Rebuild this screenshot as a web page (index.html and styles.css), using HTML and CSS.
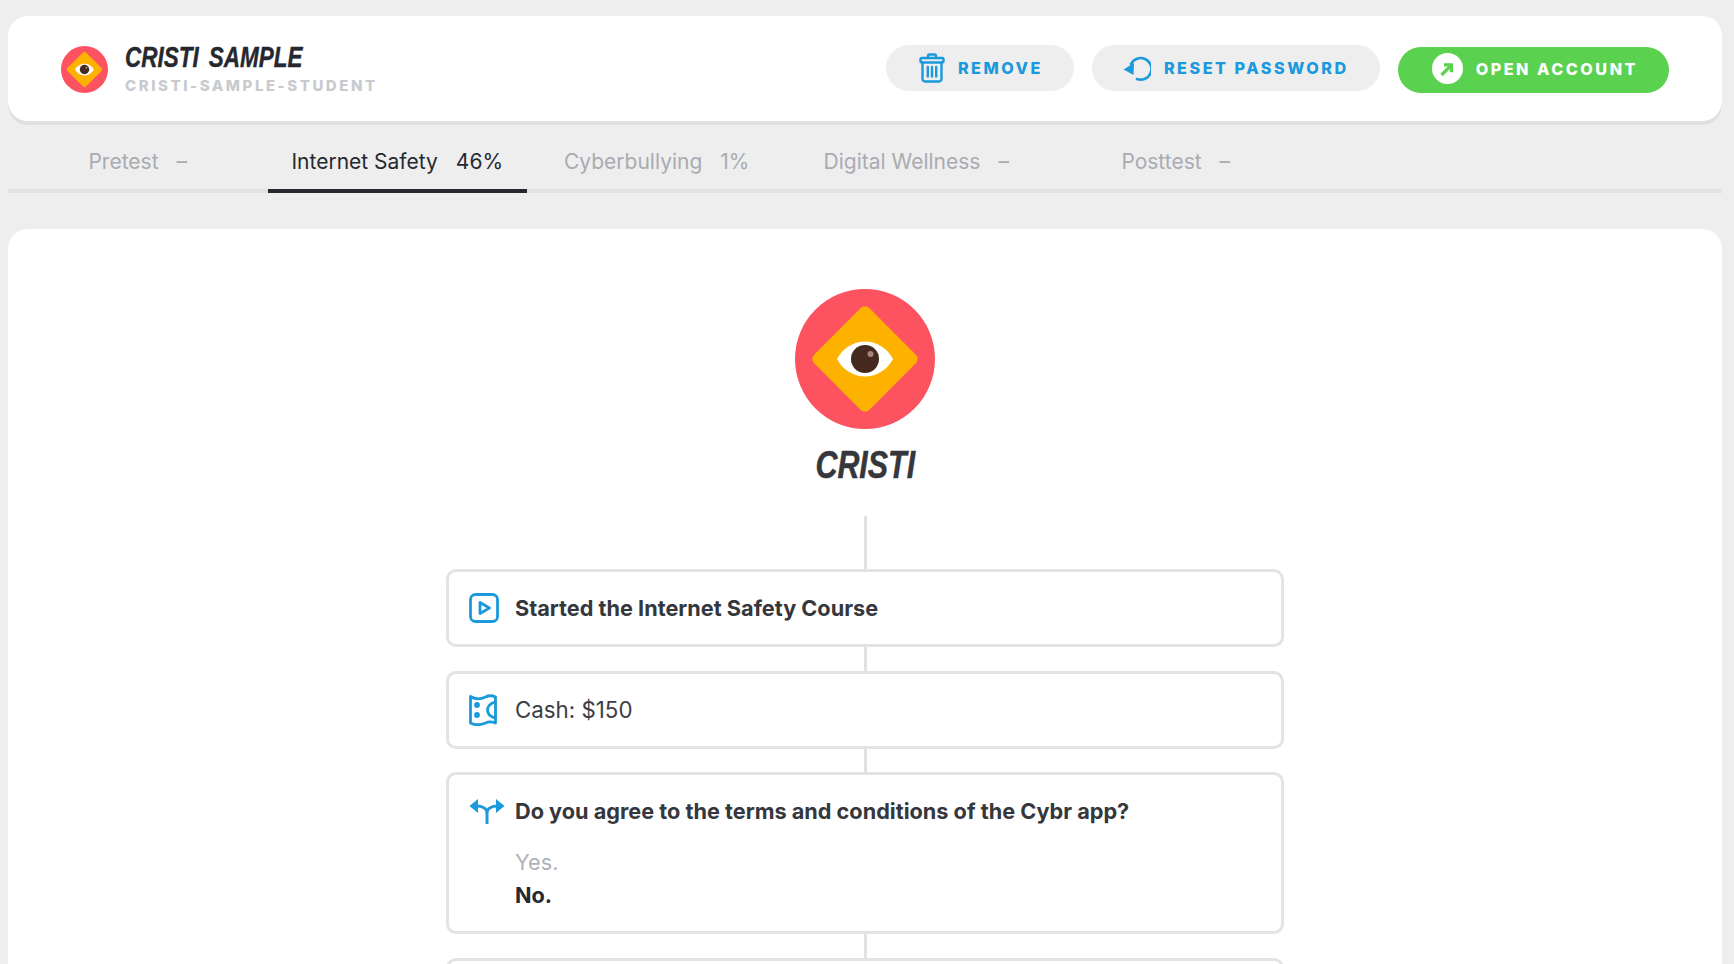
FILE: index.html
```html
<!DOCTYPE html>
<html lang="en">
<head>
<meta charset="utf-8">
<title>Cristi Sample</title>
<link rel="stylesheet" href="styles.css">
</head>
<body>
<svg class="defs" width="0" height="0" aria-hidden="true">
  <symbol id="eye" viewBox="0 0 140 140">
    <circle cx="70" cy="70" r="70" fill="#fd5260"/>
    <rect x="31" y="31" width="78" height="78" rx="6" fill="#feb200" transform="rotate(45 70 70)"/>
    <path d="M42 70C47 60 58 52.500 70 52.500s23 7.500 28 17.500c-5 10-16 17.500-28 17.500s-23-7.500-28-17.500z" fill="#fff"/>
    <circle cx="70" cy="70" r="14" fill="#46291f"/>
    <circle cx="75.500" cy="65" r="3" fill="#a5877c"/>
  </symbol>
</svg>
<header class="topbar">
  <div class="identity">
    <svg class="avatar"><use href="#eye"/></svg>
    <div class="names">
      <div class="name">CRISTI SAMPLE</div>
      <div class="handle">CRISTI-SAMPLE-STUDENT</div>
    </div>
  </div>
  <div class="actions">
    <button class="btn">
      <svg class="btn-icon" viewBox="0 0 26 30" fill="none" stroke="currentColor" stroke-width="2.400" stroke-linecap="round" stroke-linejoin="round"><path d="M9 5V3a1.500 1.500 0 0 1 1.500-1.500h5A1.500 1.500 0 0 1 17 3v2"/><rect x="1.500" y="5" width="23" height="4.500" rx="1.500"/><path d="M3.500 9.500v16.500a2.500 2.500 0 0 0 2.500 2.500h14a2.500 2.500 0 0 0 2.500-2.500V9.500"/><path d="M8.800 14v9.500M13 14v9.500M17.200 14v9.500"/></svg>
      REMOVE
    </button>
    <button class="btn btn-reset">
      <svg class="btn-icon btn-icon-wide" viewBox="0 0 28 26" fill="none" stroke="currentColor" stroke-width="2.600" stroke-linecap="round"><path d="M8 9A10.800 10.800 0 1 1 14 24"/><path d="M0.500 14.500 11 8 10.500 20z" fill="currentColor" stroke="none"/></svg>
      RESET PASSWORD
    </button>
    <button class="btn btn-open">
      <span class="open-icon"><svg viewBox="0 0 16 16" fill="none" stroke="#5bd150" stroke-width="3.200"><path d="M2.500 14 11 5.500"/><path d="M5 3.800h7.400v7.400"/></svg></span>
      OPEN ACCOUNT
    </button>
  </div>
</header>
<nav class="tabs">
  <a class="tab"><span>Pretest</span><span>–</span></a>
  <a class="tab tab-active"><span>Internet Safety</span><span>46%</span></a>
  <a class="tab"><span>Cyberbullying</span><span>1%</span></a>
  <a class="tab"><span>Digital Wellness</span><span>–</span></a>
  <a class="tab"><span>Posttest</span><span>–</span></a>
</nav>
<main class="panel">
  <svg class="hero"><use href="#eye"/></svg>
  <h1 class="hero-name">CRISTI</h1>
  <div class="line line-top"></div>
  <section class="event">
    <svg class="event-icon" viewBox="0 0 30 30" fill="none" stroke="currentColor" stroke-width="2.800" stroke-linejoin="round"><rect x="1.500" y="1.500" width="27" height="27" rx="5"/><path d="M11 9.500v11l9.500-5.500z"/></svg>
    <div class="event-title">Started the Internet Safety Course</div>
  </section>
  <div class="line"></div>
  <section class="event">
    <svg class="event-icon event-icon-cash" viewBox="0 0 28 32" fill="none" stroke="currentColor" stroke-width="2.800" stroke-linejoin="round" stroke-linecap="round"><path d="M1.500 2.500c5 3 11 2.500 15 .5 3-1.500 7-1.500 10 0v26c-4-1.500-7-1.500-10 0-5 2-10 2.500-15 0z"/><path d="M26 8c-5 1.500-7.500 4.500-7.500 8s2.500 6.500 7.500 8"/><circle cx="8" cy="11" r="1.500" fill="currentColor"/><circle cx="8" cy="21" r="1.500" fill="currentColor"/></svg>
    <div class="event-text">Cash: $150</div>
  </section>
  <div class="line"></div>
  <section class="event event-question">
    <div class="question-head">
      <svg class="event-icon split" viewBox="0 0 36 26" fill="none" stroke="currentColor" stroke-width="3"><path d="M18 26V15c0-4-4-7-11-7M18 15c0-4 4-7 11-7"/><path d="M0.500 8 9 1v14zM35.500 8 27 1v14z" fill="currentColor" stroke="none"/></svg>
      <div class="event-title">Do you agree to the terms and conditions of the Cybr app?</div>
    </div>
    <div class="answers">
      <div class="answer">Yes.</div>
      <div class="answer answer-picked">No.</div>
    </div>
  </section>
  <div class="line"></div>
  <section class="event event-next"></section>
</main>
</body>
</html>
```

FILE: styles.css
```css
* { box-sizing: border-box; }
html, body { height: 100%; }
body {
  margin: 0;
  height: 964px;
  overflow: hidden;
  padding: 16px 12px 0 8px;
  background: #eeeeef;
  font-family: Inter, "Noto Sans", sans-serif;
  color: #2b2d33;
}
.defs { position: absolute; }
.topbar {
  height: 105px;
  background: #fff;
  border-radius: 20px;
  box-shadow: 0 4px 0 #dfe0e2;
  display: flex;
  justify-content: space-between;
  align-items: center;
  padding: 0 53px;
}
.identity { display: flex; align-items: center; gap: 17px; }
.avatar { width: 47px; height: 47px; margin-top: 2px; }
.name, .hero-name {
  font-family: "Liberation Sans", Arial, sans-serif;
  font-weight: 700;
  font-style: italic;
  color: #26282f;
}
.name {
  font-size: 29px;
  line-height: 30px;
  width: 240px;
  margin-top: -1px;
  white-space: nowrap;
  word-spacing: 5px;
  transform: scaleX(.775);
  transform-origin: left center;
  -webkit-text-stroke: .4px #26282f;
}
.handle {
  font-size: 15px;
  line-height: 18px;
  margin-top: 5px;
  font-weight: 800;
  letter-spacing: 2.550px;
  color: #c8cace;
}
.actions { display: flex; gap: 18px; align-items: flex-start; }
.btn {
  height: 46px;
  border: 0;
  border-radius: 23px;
  background: #eeeeef;
  color: #1a99dc;
  display: flex;
  align-items: center;
  gap: 13px;
  padding: 0 31px 0 33px;
  font-family: Inter, sans-serif;
  font-size: 16.200px;
  font-weight: 800;
  letter-spacing: 2.500px;
}
.btn-icon { width: 26px; height: 30px; flex: none; }
.btn-reset { padding-left: 31px; }
.btn-icon-wide { width: 28px; height: 26px; }
.btn-open {
  background: #5bd150;
  color: #fff;
  margin-top: 2px;
  padding-left: 34px;
  padding-bottom: 2px;
}
.open-icon {
  width: 31px; height: 31px; border-radius: 50%; background: #fff;
  display: flex; align-items: center; justify-content: center;
}
.open-icon svg { width: 16px; height: 16px; }
.tabs {
  display: flex;
  margin-top: 4px;
  height: 68px;
  border-bottom: 4px solid #e0e1e3;
}
.tab {
  flex: 0 0 259.500px;
  height: 68px;
  display: flex;
  align-items: center;
  justify-content: center;
  gap: 18px;
  font-size: 21px;
  color: #a9abb1;
  padding-top: 8px;
  margin-bottom: -4px;
  border-bottom: 4px solid transparent;
}
.tab-active { color: #26282f; border-bottom-color: #26282f; }
.panel {
  margin-top: 36px;
  background: #fff;
  border-radius: 20px 20px 0 0;
  height: 740px;
  display: flex;
  flex-direction: column;
  align-items: center;
  padding-top: 60px;
}
.hero { width: 140px; height: 140px; flex: none; }
.hero-name {
  margin: 14px 0 0;
  font-size: 38px;
  line-height: 44px;
  color: #35373c;
  transform: scaleX(.8);
  -webkit-text-stroke: .5px #35373c;
}
.line { width: 3px; height: 23.500px; background: #e0e1e3; flex: none; }
.line-top { height: 53px; margin-top: 29px; }
.event {
  width: 838px;
  flex: none;
  border: 3px solid #e2e3e5;
  border-radius: 10px;
  height: 78px;
  display: flex;
  align-items: center;
  gap: 16px;
  padding: 0 20px;
  font-size: 21.700px;
}
.event-icon { width: 30px; height: 30px; color: #1a99dc; flex: none; }
.event-icon-cash { height: 32px; margin-right: 2px; width: 28px; }
.event-title { font-weight: 700; color: #35373c; }
.event-text { color: #3c3e44; font-size: 22.300px; }
.event-question { height: 162px; display: block; padding-top: 23px; }
.question-head { display: flex; align-items: center; gap: 10px; }
.split { width: 36px; height: 26px; }
.answers { margin: 22px 0 0 46px; }
.answer { line-height: 33px; color: #b0b2b7; }
.answer-picked { font-weight: 700; color: #26282f; }
.event-next { height: 80px; }
```
